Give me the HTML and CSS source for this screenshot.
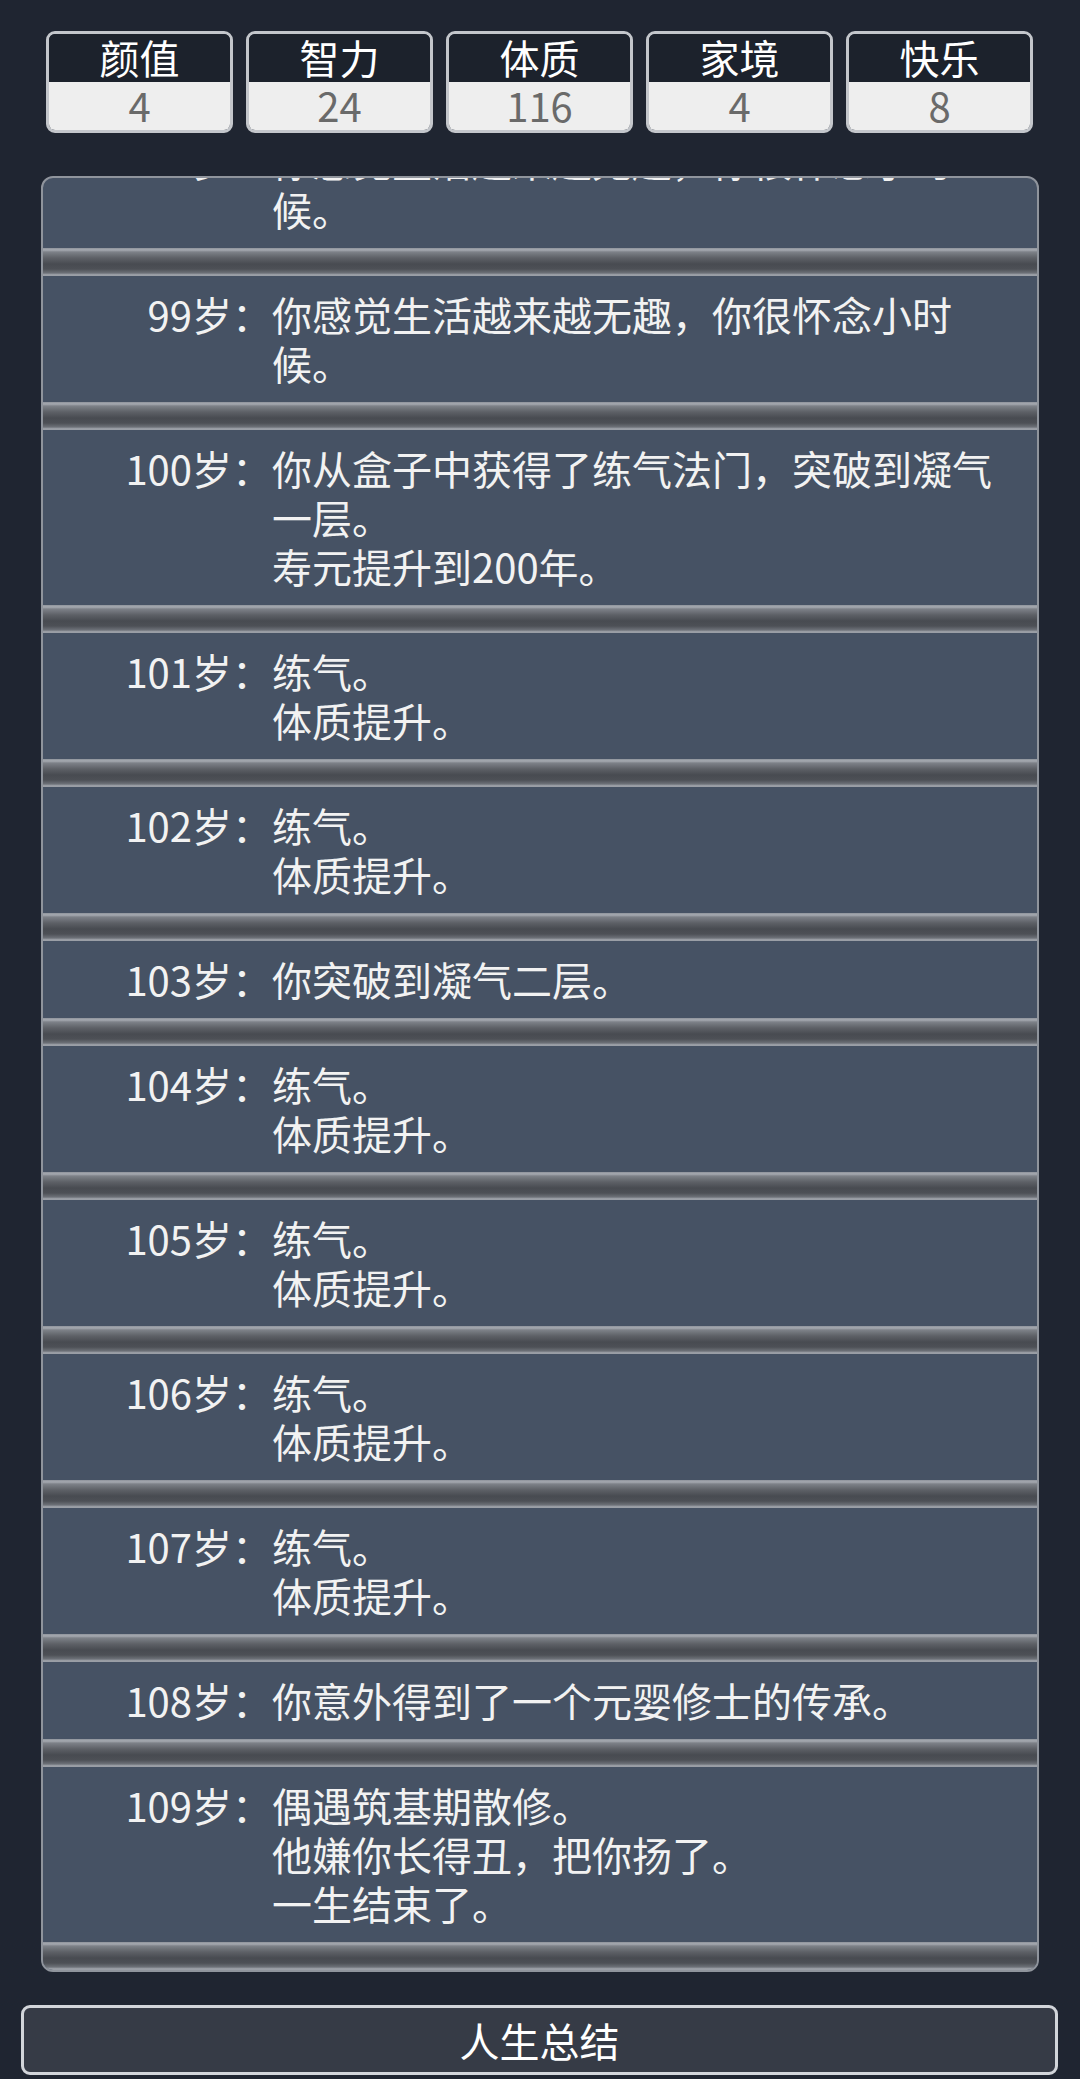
FILE: index.html
```html
<!DOCTYPE html>
<html>

<head>
    <meta charset="utf-8">
    <title>人生重开模拟器</title>
    <link rel="stylesheet" href="styles.css">
</head>

<body>
    <div class="page">
        <ul class="stats">
            <li class="stat"><div class="stat-name">颜值</div><div class="stat-value">4</div></li>
            <li class="stat"><div class="stat-name">智力</div><div class="stat-value">24</div></li>
            <li class="stat"><div class="stat-name">体质</div><div class="stat-value">116</div></li>
            <li class="stat"><div class="stat-name">家境</div><div class="stat-value">4</div></li>
            <li class="stat"><div class="stat-name">快乐</div><div class="stat-value">8</div></li>
        </ul>

        <ul class="lifelog">
            <li><div class="row"><span class="age">98岁：</span><span class="event">你感觉生活越来越无趣，你很怀念小时候。</span></div></li>
            <li><div class="row"><span class="age">99岁：</span><span class="event">你感觉生活越来越无趣，你很怀念小时候。</span></div></li>
            <li><div class="row"><span class="age">100岁：</span><span class="event">你从盒子中获得了练气法门，突破到凝气一层。<br>寿元提升到200年。</span></div></li>
            <li><div class="row"><span class="age">101岁：</span><span class="event">练气。<br>体质提升。</span></div></li>
            <li><div class="row"><span class="age">102岁：</span><span class="event">练气。<br>体质提升。</span></div></li>
            <li><div class="row"><span class="age">103岁：</span><span class="event">你突破到凝气二层。</span></div></li>
            <li><div class="row"><span class="age">104岁：</span><span class="event">练气。<br>体质提升。</span></div></li>
            <li><div class="row"><span class="age">105岁：</span><span class="event">练气。<br>体质提升。</span></div></li>
            <li><div class="row"><span class="age">106岁：</span><span class="event">练气。<br>体质提升。</span></div></li>
            <li><div class="row"><span class="age">107岁：</span><span class="event">练气。<br>体质提升。</span></div></li>
            <li><div class="row"><span class="age">108岁：</span><span class="event">你意外得到了一个元婴修士的传承。</span></div></li>
            <li><div class="row"><span class="age">109岁：</span><span class="event">偶遇筑基期散修。<br>他嫌你长得丑，把你扬了。<br>一生结束了。</span></div></li>
        </ul>

        <button class="summary">人生总结</button>
    </div>
</body>

</html>
```

FILE: styles.css
```css
body {
    margin: 0;
    background-color: #1f2531;
    font-family: "Noto Sans CJK SC", "Noto Sans", sans-serif;
    color: #f2f2f2;
}

.page {
    height: 2079px;
    display: flex;
    flex-direction: column;
}

.stats {
    list-style: none;
    margin: 0;
    padding: 31px 47px 0 46px;
    display: flex;
    gap: 13px;
}

.stat {
    flex: 1;
    border: 3px solid #c3c6cb;
    border-radius: 9px;
    text-align: center;
    font-size: 40px;
}

.stat-name {
    height: 48px;
    line-height: 47px;
    background-color: #1c222c;
    color: #ffffff;
    border-radius: 6px 6px 0 0;
}

.stat-value {
    height: 48px;
    line-height: 46px;
    background-color: #eeeeee;
    color: #6a6a6a;
    border-radius: 0 0 6px 6px;
}

.lifelog {
    list-style: none;
    margin: 43px 41px 0 41px;
    padding: 0;
    height: 1792px;
    border: 2px solid #8f949c;
    border-radius: 12px;
    background-color: #465264;
    overflow: hidden;
    display: flex;
    flex-direction: column;
    justify-content: flex-end;
}

.lifelog li {
    flex-shrink: 0;
}

.lifelog li::after {
    content: "";
    display: block;
    height: 28px;
    background: linear-gradient(#8e939b 0, #a6aab1 2px, #7d8188 4px, #5d6066 10px, #484b51 16px, #4d5056 21px, #6d7178 25px, #a6aab1 27px, #8e939b 28px);
}

.row {
    display: flex;
    padding: 14px 0;
    font-size: 40px;
    line-height: 49px;
}

.age {
    width: 229px;
    flex-shrink: 0;
    text-align: right;
    white-space: nowrap;
}

.event {
    width: 740px;
}

.summary {
    margin: 33px 22px 0 21px;
    height: 70px;
    border: 3px solid #d2d5da;
    border-radius: 9px;
    background-color: #363b46;
    color: #ffffff;
    font-family: inherit;
    font-size: 40px;
    padding: 0;
}
```
